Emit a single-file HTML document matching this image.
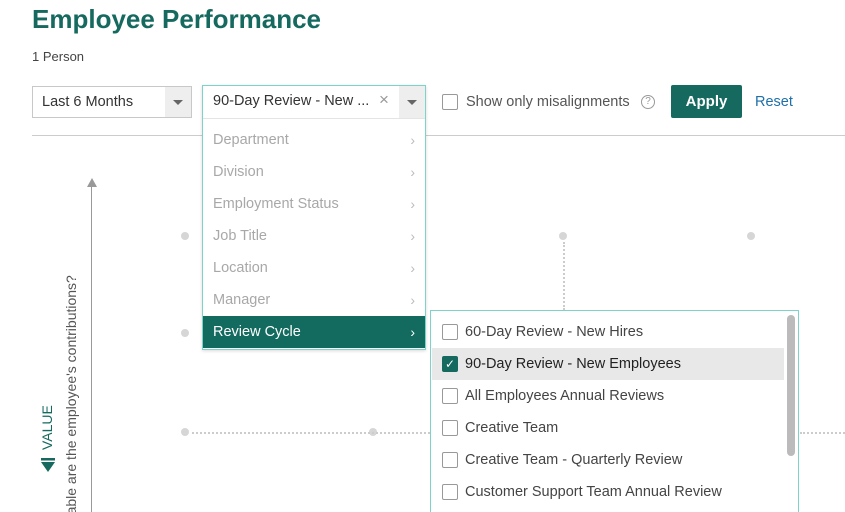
<!DOCTYPE html>
<html style="overflow:hidden;width:845px;height:512px"><head><style>
*{margin:0;padding:0;box-sizing:border-box}
body{width:845px;height:512px;overflow:hidden;background:#fff;font-family:"Liberation Sans",sans-serif;position:relative;color:#333}
.a{position:absolute}
.dot{position:absolute;width:8px;height:8px;border-radius:50%;background:#d6d6d6}
.mi{position:absolute;left:0;width:222px;height:32px;line-height:32px;padding-left:10px;font-size:14.5px;color:#a8a8a8}
.mi span{position:absolute;right:10px;top:0;font-size:14px;color:#bbb}
.si{position:absolute;left:1px;width:352px;height:32px;line-height:32px;padding-left:33px;font-size:14.5px;color:#444}
.cb{position:absolute;left:10px;top:8px;width:16px;height:16px;border:1px solid #999;border-radius:2px;background:#fff}
</style></head><body>
<div class="a" style="left:32px;top:4px;font-size:26px;font-weight:bold;color:#15695f">Employee Performance</div>
<div class="a" style="left:32px;top:49px;font-size:13px;color:#444">1 Person</div>

<div class="a" style="left:32px;top:86px;width:160px;height:32px;border:1px solid #c8c8c8;background:#fff"><div class="a" style="left:9px;top:7px;font-size:14.5px;color:#333">Last 6 Months</div><div class="a" style="right:0;top:0;width:26px;height:30px;background:#eee"></div><div class="a" style="right:8px;top:13px;border-left:5px solid transparent;border-right:5px solid transparent;border-top:5px solid #666"></div></div>

<div class="a" style="left:32px;top:135px;width:813px;height:1px;background:#ccc"></div>

<div class="a" style="left:202px;top:85px;width:224px;height:265px;border:1px solid #7dd3c9;background:#fff;box-shadow:0 1px 3px rgba(0,0,0,.15)">
<div class="a" style="left:10px;top:7px;font-size:14.5px;color:#333">90-Day Review - New ...</div>
<div class="a" style="left:176px;top:4px;font-size:17px;color:#999">×</div>
<div class="a" style="right:0;top:0;width:26px;height:32px;background:#eee"></div><div class="a" style="right:8px;top:14px;border-left:5px solid transparent;border-right:5px solid transparent;border-top:5px solid #666"></div>
<div class="a" style="left:0;top:32px;width:222px;height:1px;background:#e4e4e4"></div>
<div class="mi" style="top:38px">Department<span>›</span></div>
<div class="mi" style="top:70px">Division<span>›</span></div>
<div class="mi" style="top:102px">Employment Status<span>›</span></div>
<div class="mi" style="top:134px">Job Title<span>›</span></div>
<div class="mi" style="top:166px">Location<span>›</span></div>
<div class="mi" style="top:198px">Manager<span>›</span></div>
<div class="mi" style="top:230px;background:#136b60;color:#fff">Review Cycle<span style="color:#fff">›</span></div>
</div>

<div class="a" style="left:442px;top:94px;width:16px;height:16px;border:1px solid #999;border-radius:2px"></div>
<div class="a" style="left:466px;top:94px;font-size:14.5px;color:#555">Show only misalignments</div>
<div class="a" style="left:641px;top:95px;width:14px;height:14px;border:1px solid #999;border-radius:50%;font-size:10px;line-height:12px;text-align:center;color:#999">?</div>
<div class="a" style="left:671px;top:85px;width:71px;height:33px;background:#15695f;border-radius:2px;color:#fff;font-weight:bold;font-size:15px;line-height:33px;text-align:center">Apply</div>
<div class="a" style="left:755px;top:94px;font-size:14.5px;color:#1f6fa8">Reset</div>

<div class="a" style="left:91px;top:185px;width:1px;height:327px;background:#999"></div>
<div class="a" style="left:87px;top:178px;border-left:5px solid transparent;border-right:5px solid transparent;border-bottom:9px solid #999"></div>
<div class="a" style="left:39px;top:380px;height:70px;writing-mode:vertical-rl;transform:rotate(180deg);text-align:left;font-size:14px;color:#15695f;white-space:nowrap">VALUE</div>
<svg class="a" style="left:40px;top:457px" width="16" height="16"><rect x="1" y="1" width="14" height="2.5" fill="#15695f"/><polygon points="1,5 15,5 8,15" fill="#15695f"/></svg>
<div class="a" style="left:63px;top:275px;height:237px;width:20px;overflow:hidden">
<div class="a" style="left:0;top:0;height:400px;width:18px;writing-mode:vertical-rl;transform:rotate(180deg);transform-origin:50% 200px;text-align:right;font-size:14px;color:#555;white-space:nowrap">How valuable are the employee's contributions?</div>
</div>

<div class="dot" style="left:181px;top:232px"></div><div class="dot" style="left:559px;top:232px"></div><div class="dot" style="left:747px;top:232px"></div>
<div class="dot" style="left:181px;top:329px"></div><div class="dot" style="left:181px;top:428px"></div><div class="dot" style="left:369px;top:428px"></div>
<div class="a" style="left:563px;top:242px;height:68px;border-left:2px dotted #ccc"></div>
<div class="a" style="left:192px;top:432px;width:238px;border-top:2px dotted #ccc"></div>
<div class="a" style="left:800px;top:432px;width:45px;border-top:2px dotted #ccc"></div>

<div class="a" style="left:430px;top:310px;width:369px;height:202px;border:1px solid #7dd3c9;border-bottom:none;background:#fff">
<div class="si" style="top:5px"><div class="cb"></div>60-Day Review - New Hires</div>
<div class="si" style="top:37px;background:#e8e8e8;color:#222"><div class="cb" style="background:#15695f;border-color:#15695f;color:#fff;font-size:12px;line-height:14px;text-align:center">✓</div>90-Day Review - New Employees</div>
<div class="si" style="top:69px"><div class="cb"></div>All Employees Annual Reviews</div>
<div class="si" style="top:101px"><div class="cb"></div>Creative Team</div>
<div class="si" style="top:133px"><div class="cb"></div>Creative Team - Quarterly Review</div>
<div class="si" style="top:165px"><div class="cb"></div>Customer Support Team Annual Review</div>
<div class="a" style="left:356px;top:4px;width:8px;height:141px;background:#bbb;border-radius:4px"></div>
</div>
</body></html>
